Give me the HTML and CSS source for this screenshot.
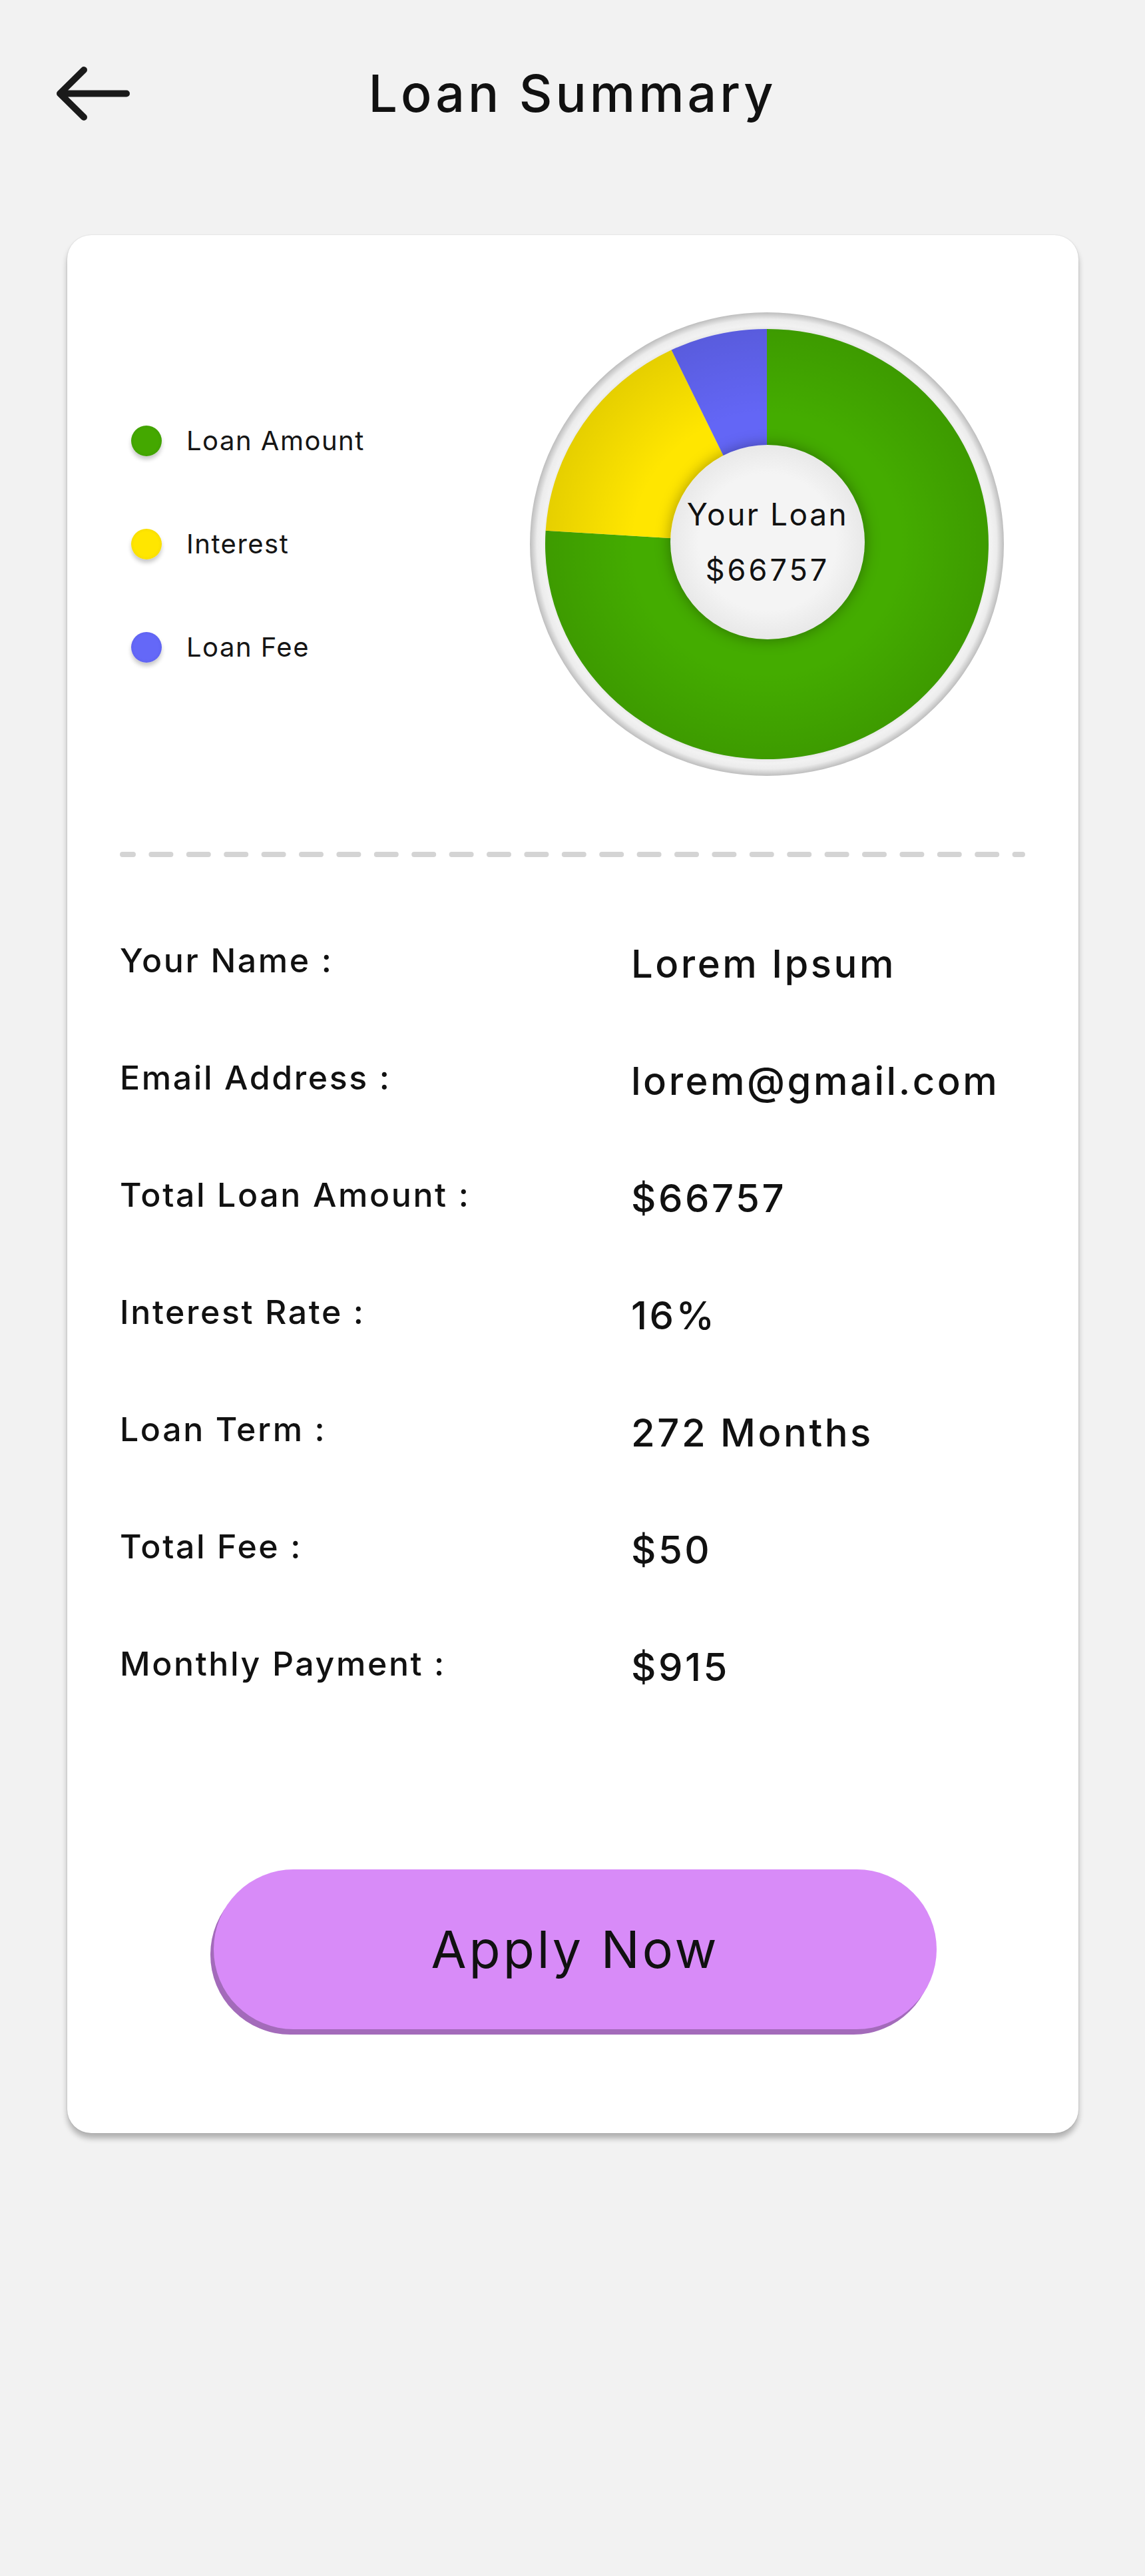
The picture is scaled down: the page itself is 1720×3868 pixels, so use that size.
FILE: index.html
```html
<!DOCTYPE html>
<html lang="en">
<head>
<meta charset="utf-8">
<title>Loan Summary</title>
<link rel="stylesheet" href="styles.css">
</head>
<body>
<header class="topbar">
  <div class="back">
    <svg class="back-icon" width="111" height="81" viewBox="0 0 111 81" aria-hidden="true">
      <path d="M42 5 L6 40.5 L42 76 M6 40.5 H106" fill="none" stroke="#1a1a1a" stroke-width="10" stroke-linecap="round" stroke-linejoin="round"/>
    </svg>
  </div>
  <h1 class="title">Loan Summary</h1>
  <div class="spacer"></div>
</header>

<main class="card">
  <section class="overview">
    <ul class="legend">
      <li class="legend-item"><span class="dot dot-green"></span>Loan Amount</li>
      <li class="legend-item"><span class="dot dot-yellow"></span>Interest</li>
      <li class="legend-item"><span class="dot dot-blue"></span>Loan Fee</li>
    </ul>
    <div class="chart">
      <svg class="chart-svg" width="712" height="696" viewBox="0 0 712 696" aria-hidden="true">
        <defs>
          <radialGradient id="ring" cx="0.5" cy="0.5" r="0.5">
            <stop offset="0.90" stop-color="#d8d8d8"/>
            <stop offset="0.945" stop-color="#f2f2f2"/>
            <stop offset="0.97" stop-color="#ececec"/>
            <stop offset="1" stop-color="#bdbdbd"/>
          </radialGradient>
          <radialGradient id="shade" cx="0.5" cy="0.5" r="0.5">
            <stop offset="0.6" stop-color="#000" stop-opacity="0"/>
            <stop offset="1" stop-color="#000" stop-opacity="0.1"/>
          </radialGradient>
        </defs>
        <ellipse cx="356" cy="348" rx="356" ry="348" fill="url(#ring)"/>
        <path d="M356 348 L356 25 A333 323 0 1 1 23.66 327.72 Z" fill="#44ac00"/>
        <path d="M356 348 L23.66 327.72 A333 323 0 0 1 212.64 56.46 Z" fill="#ffe600"/>
        <path d="M356 348 L212.64 56.46 A333 323 0 0 1 356 25 Z" fill="#6366f6"/>
        <ellipse cx="356" cy="348" rx="333" ry="323" fill="url(#shade)"/>
      </svg>
      <div class="center">
        <span class="center-label">Your Loan</span>
        <span class="center-value">$66757</span>
      </div>
    </div>
  </section>

  <svg class="divider" width="1360" height="8" viewBox="0 0 1360 8" aria-hidden="true">
    <line x1="4" y1="4" x2="1356" y2="4" stroke="#d4d4d4" stroke-width="8" stroke-linecap="round" stroke-dasharray="29 27.4" stroke-dashoffset="13"/>
  </svg>

  <dl class="details">
    <div class="row"><dt class="label">Your Name :</dt><dd class="value">Lorem Ipsum</dd></div>
    <div class="row"><dt class="label">Email Address :</dt><dd class="value">lorem@gmail.com</dd></div>
    <div class="row"><dt class="label">Total Loan Amount :</dt><dd class="value">$66757</dd></div>
    <div class="row"><dt class="label">Interest Rate :</dt><dd class="value">16%</dd></div>
    <div class="row"><dt class="label">Loan Term :</dt><dd class="value">272 Months</dd></div>
    <div class="row"><dt class="label">Total Fee :</dt><dd class="value">$50</dd></div>
    <div class="row"><dt class="label">Monthly Payment :</dt><dd class="value">$915</dd></div>
  </dl>

  <button class="apply" type="button">Apply Now</button>
</main>
</body>
</html>
```

FILE: styles.css
```css
* { box-sizing: border-box; }

html, body {
  margin: 0;
  padding: 0;
}

body {
  background: #f2f2f2;
  font-family: "Inter", "Noto Sans", "Liberation Sans", sans-serif;
  color: #111;
  width: 1720px;
  min-height: 3868px;
}

.topbar {
  display: grid;
  grid-template-columns: 1fr auto 1fr;
  align-items: center;
  height: 280px;
}

.back {
  padding-left: 84px;
  display: flex;
  align-items: center;
}

.back-icon { display: block; }

.title {
  margin: 0;
  font-size: 77px;
  font-weight: 500;
  line-height: 1;
  color: #111;
  letter-spacing: 5px;
}

.card {
  margin: 73px 100px 0 101px;
  background: #fff;
  border-radius: 36px;
  box-shadow: 0 8px 8px rgba(0, 0, 0, 0.27), 0 0 2px rgba(0, 0, 0, 0.15);
  padding: 116px 80px 156px 79px;
}

.overview {
  display: flex;
  align-items: center;
  justify-content: space-between;
}

.legend {
  list-style: none;
  margin: 0 0 0 17px;
  padding: 0;
  display: flex;
  flex-direction: column;
  gap: 109px;
}

.legend-item {
  display: flex;
  align-items: center;
  gap: 37px;
  font-size: 40px;
  line-height: 46px;
  letter-spacing: 1.5px;
  color: #151515;
}

.dot {
  width: 46px;
  height: 46px;
  border-radius: 50%;
  box-shadow: 0 5px 6px rgba(0, 0, 0, 0.22);
  flex: none;
}

.dot-green { background: radial-gradient(circle, #44a800 55%, #3a9500 100%); }
.dot-yellow { background: radial-gradient(circle, #ffe600 55%, #ecd000 100%); }
.dot-blue { background: radial-gradient(circle, #6468f8 55%, #585ce6 100%); }

.chart {
  position: relative;
  width: 712px;
  height: 696px;
  margin-right: 32px;
}

.chart-svg { display: block; }

.center {
  position: absolute;
  left: 211px;
  top: 199px;
  width: 292px;
  height: 292px;
  border-radius: 50%;
  background: radial-gradient(circle, #f4f4f4 50%, #d8d8d8 100%);
  box-shadow: 0 0 22px rgba(0, 0, 0, 0.35);
  display: flex;
  flex-direction: column;
  align-items: center;
  justify-content: center;
}

.center-label,
.center-value {
  display: block;
  font-size: 46px;
  line-height: 84px;
  letter-spacing: 2.5px;
  color: #111;
}

.center-value {
  font-size: 45px;
  letter-spacing: 4px;
}

.divider {
  display: block;
  margin-top: 114px;
}

.details {
  margin: 125px 0 0 0;
  padding: 0;
}

.row {
  display: grid;
  grid-template-columns: 768px 1fr;
  align-items: start;
  height: 176px;
}

.label {
  margin: 0;
  font-size: 50px;
  line-height: 60px;
  font-weight: 500;
  letter-spacing: 2.6px;
  color: #111;
}

.value {
  margin: 5px 0 0 0;
  font-size: 58px;
  line-height: 60px;
  font-weight: 500;
  letter-spacing: 3.5px;
  color: #111;
}

.apply {
  display: block;
  margin: 163px 0 0 141px;
  width: 1086px;
  height: 240px;
  border: 0;
  border-radius: 120px;
  background: #d88bf8;
  box-shadow: -5px 8px 0 #a36bba;
  font-family: inherit;
  font-size: 77px;
  font-weight: 400;
  letter-spacing: 4px;
  color: #111;
  padding: 0;
}
```
